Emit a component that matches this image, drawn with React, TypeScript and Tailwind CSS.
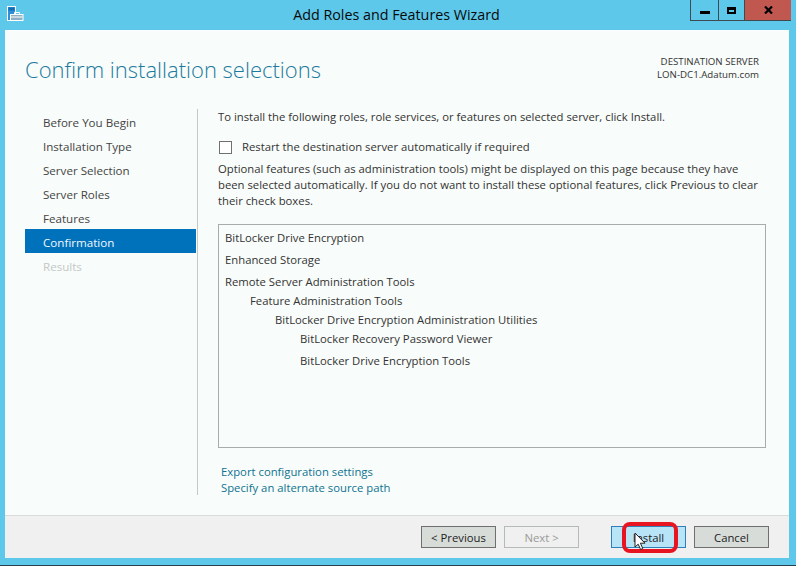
const font = { fontFamily: '"Open Sans", "Noto Sans", sans-serif' };

function Nav({ label, state }: { label: string; state?: 'active' | 'off' }) {
  const cls =
    state === 'active'
      ? 'bg-[#0072bc] text-[#f2f8fc]'
      : state === 'off'
        ? 'text-[#c4c8c8]'
        : 'text-[#444444]';
  return <div className={`h-6 flex items-center pl-[18px] pt-[3px] text-[11.6px] ${cls}`}>{label}</div>;
}

function Btn({ label, disabled }: { label: string; disabled?: boolean }) {
  return (
    <div
      className={`w-[75px] h-[22px] flex items-center justify-center pt-[2px] border text-[11.3px] ${
        disabled ? 'border-[#b4bab6] bg-[#eff0ef] text-[#9a9a9a]' : 'border-[#6f6f6f] bg-[#d8dcd9] text-[#222222]'
      }`}
    >
      {label}
    </div>
  );
}

function Row({ label, pl, h }: { label: string; pl: string; h: string }) {
  return <div className={`leading-[19px] ${pl} ${h}`}>{label}</div>;
}

export default function App() {
  return (
    <div className="w-[796px] h-[566px] bg-[#5ec8ea] flex flex-col overflow-hidden relative" style={font}>
      <div className="h-[30px] shrink-0 flex relative">
        <svg className="absolute left-[7px] top-[5px]" width="17" height="17" viewBox="0 0 17 17">
          <rect x="0.5" y="1.5" width="8" height="14" fill="#2f8fd6" stroke="#ffffff" />
          <rect x="1.5" y="2.5" width="6" height="3" fill="#0f6cb8" />
          <rect x="3.5" y="9.5" width="12.5" height="6" fill="#8fb0c2" stroke="#ffffff" />
          <rect x="4" y="11.5" width="11.5" height="1" fill="#ffffff" />
          <path d="M7.5 9.5V7.5h5v2" fill="none" stroke="#ffffff" />
        </svg>
        <div className="flex-1 text-center text-[14.3px] leading-[30px] text-[#0a0a0a] pr-[3px]">Add Roles and Features Wizard</div>
        <div className="absolute right-[5px] top-0 h-[21px] flex border border-t-0 border-r-0 border-[#3f4a50]">
          <div className="w-[28px] flex items-center justify-center border-r border-[#3f4a50]">
            <div className="w-[10px] h-[3px] bg-black mt-[5px]" />
          </div>
          <div className="w-[26px] flex items-center justify-center border-r border-[#3f4a50]">
            <div className="w-[9px] h-[7px] border-2 border-black border-t-[3px]" />
          </div>
          <div className="w-[46px] flex items-center justify-center bg-[#c0584f]">
            <svg width="9" height="8" viewBox="0 0 9 8">
              <path d="M1 0.5L8 7.5M8 0.5L1 7.5" stroke="#000" strokeWidth="2.2" />
            </svg>
          </div>
        </div>
      </div>

      <div className="ml-[5px] mr-[7px] h-[528px] flex flex-col bg-[#f8fcfa] shrink-0">
        <div className="h-[79px] shrink-0 flex justify-between pl-5 pr-[30px]">
          <div className="text-[22px] leading-[30px] pt-[24px] text-[#1b7a9e] font-light">Confirm installation selections</div>
          <div className="text-[9.7px] leading-[13px] text-[#333333] text-right pt-[25px]">
            <div>DESTINATION SERVER</div>
            <div>LON-DC1.Adatum.com</div>
          </div>
        </div>

        <div className="flex h-[406px] shrink-0">
          <div className="w-[171px] ml-5 mr-px shrink-0 self-start">
            <Nav label="Before You Begin" />
            <Nav label="Installation Type" />
            <Nav label="Server Selection" />
            <Nav label="Server Roles" />
            <Nav label="Features" />
            <Nav label="Confirmation" state="active" />
            <Nav label="Results" state="off" />
          </div>
          <div className="w-px h-[386px] bg-[#c4c8c6] shrink-0" />
          <div className="flex-1 pl-5 pr-[23px] text-[11.3px] text-[#333333]">
            <div className="leading-4">To install the following roles, role services, or features on selected server, click Install.</div>
            <div className="flex items-center mt-[14px] h-4">
              <div className="w-[13px] h-[13px] border border-[#707070] bg-white ml-px" />
              <span className="ml-[10px]">Restart the destination server automatically if required</span>
            </div>
            <div className="leading-4 mt-[6px] w-[548px]">
              Optional features (such as administration tools) might be displayed on this page because they have been selected automatically. If you do not want to install these optional features, click Previous to clear their check boxes.
            </div>
            <div className="mt-[15px] h-[224px] border border-[#a9aca9] pl-[6px] pt-[3px]">
              <Row label="BitLocker Drive Encryption" pl="" h="h-[22px]" />
              <Row label="Enhanced Storage" pl="" h="h-[22px]" />
              <Row label="Remote Server Administration Tools" pl="" h="h-[19px]" />
              <Row label="Feature Administration Tools" pl="pl-[25px]" h="h-[19px]" />
              <Row label="BitLocker Drive Encryption Administration Utilities" pl="pl-[50px]" h="h-[19px]" />
              <Row label="BitLocker Recovery Password Viewer" pl="pl-[75px]" h="h-[22px]" />
              <Row label="BitLocker Drive Encryption Tools" pl="pl-[75px]" h="h-[19px]" />
            </div>
            <div className="mt-[16px] ml-[3px] leading-4 text-[#0f7391]">
              <div>Export configuration settings</div>
              <div>Specify an alternate source path</div>
            </div>
          </div>
        </div>

        <div className="h-[43px] shrink-0 bg-[#f0f0f0] border-t border-[#d9dbd9] flex items-start pt-[10px] pl-[416px]">
          <Btn label="< Previous" />
          <div className="w-2" />
          <Btn label="Next >" disabled />
          <div className="w-[32px]" />
          <div className="w-[75px] h-[22px] flex items-center justify-center pt-[2px] border border-[#2f7fb8] bg-[#b8e4f8] text-[11.3px] text-[#222222]">Install</div>
          <div className="w-2" />
          <Btn label="Cancel" />
        </div>
      </div>

      <div className="flex-1" />
      <div className="h-px bg-[#27404c] shrink-0" />

      <div className="absolute left-[622px] top-[522px] w-[56px] h-[31px] rounded-[8px] border-[4px] border-[#e8141f]" />
      <svg className="absolute left-[634px] top-[532px]" width="13" height="19" viewBox="0 0 13 19">
        <path d="M1 1V15L4.2 12.2L6.6 17.5L8.8 16.5L6.4 11.2H11Z" fill="#ffffff" stroke="#222222" strokeWidth="1" />
      </svg>
    </div>
  );
}
